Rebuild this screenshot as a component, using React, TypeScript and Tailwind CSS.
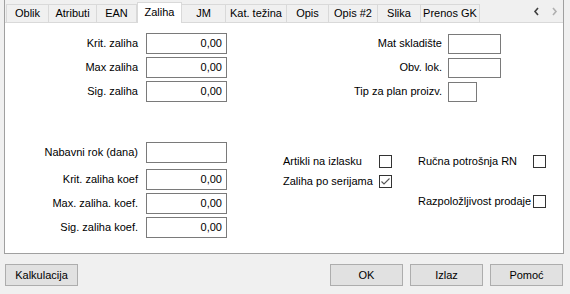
import React from 'react'

const tabs = [
  { name: 'Oblik', w: 'w-[43px]' },
  { name: 'Atributi', w: 'w-[48px]' },
  { name: 'EAN', w: 'w-[40px]' },
  { name: 'Zaliha', w: 'w-[45px]', active: true },
  { name: 'JM', w: 'w-[44px]' },
  { name: 'Kat. težina', w: 'w-[61px]' },
  { name: 'Opis', w: 'w-[42px]' },
  { name: 'Opis #2', w: 'w-[49px]' },
  { name: 'Slika', w: 'w-[43px]' },
  { name: 'Prenos GK', w: 'w-[59px]' },
]

const Input = ({ value, className }: { value?: string; className: string }) => (
  <div
    className={`bg-white border border-[#7a7a7a] flex items-center justify-end pr-[4px] ${className}`}
  >
    {value}
  </div>
)

const LeftRow = ({ label, value }: { label: string; value?: string }) => (
  <div className="flex items-center h-[21px] gap-[8px]">
    <div className="w-[133px] text-right">{label}</div>
    <Input value={value} className="w-[81px] h-[21px]" />
  </div>
)

const RightRow = ({ label, w }: { label: string; w: string }) => (
  <div className="flex items-center h-[21px] gap-[6px]">
    <div className="w-[120px] text-right">{label}</div>
    <Input className={`${w} h-[20px]`} />
  </div>
)

const Checkbox = ({ checked }: { checked?: boolean }) => (
  <div className="w-[13px] h-[13px] border border-[#333] bg-white flex items-center justify-center">
    {checked && (
      <svg width="11" height="11" viewBox="0 0 11 11">
        <path d="M1.5 5.5 L4 8 L9.5 2.5" fill="none" stroke="#555" strokeWidth="1.1" />
      </svg>
    )}
  </div>
)

const Button = ({ label }: { label: string }) => (
  <div className="w-[73px] h-[22px] bg-[#e1e1e1] border border-[#adadad] flex items-center justify-center">
    {label}
  </div>
)

export default function App() {
  return (
    <div className="w-[570px] h-[294px] bg-[#f0f0f0] text-[11px] text-black overflow-hidden font-['Liberation_Sans',Arial,sans-serif]">
      <div className="ml-[4px] w-[560px] h-[254px] border-x border-b border-[#a0a0a0] flex flex-col">
        {/* Tabs */}
        <div className="h-[22px] flex items-end pl-[1px] shrink-0">
          {tabs.map((t, i) =>
            t.active ? (
              <div
                key={t.name}
                className={`${t.w} h-[21px] -mb-px relative z-10 bg-white border-x border-t border-[#d9d9d9] flex items-center justify-center pb-[2px]`}
              >
                {t.name}
              </div>
            ) : (
              <div
                key={t.name}
                className={`${t.w} h-[18px] border-t border-r border-[#d9d9d9] ${i === 0 ? 'border-l' : ''} flex items-center justify-center`}
              >
                {t.name}
              </div>
            )
          )}
          <div className="ml-auto w-[36px] h-[22px] flex items-center">
            <div className="w-[18px] flex justify-center">
              <svg width="7" height="9" viewBox="0 0 7 9">
                <path d="M5 1 L2 4.5 L5 8" fill="none" stroke="#404040" strokeWidth="1.6" />
              </svg>
            </div>
            <div className="w-[18px] flex justify-center">
              <svg width="7" height="9" viewBox="0 0 7 9">
                <path d="M2 1 L5 4.5 L2 8" fill="none" stroke="#b0b0b0" strokeWidth="1.6" />
              </svg>
            </div>
          </div>
        </div>

        {/* Panel */}
        <div className="flex-1 bg-white border-t border-[#d9d9d9] pt-[10px]">
          <div className="flex">
            <div className="flex flex-col gap-[3px]">
              <LeftRow label="Krit. zaliha" value="0,00" />
              <LeftRow label="Max zaliha" value="0,00" />
              <LeftRow label="Sig. zaliha" value="0,00" />
            </div>
            <div className="ml-[95px] flex flex-col gap-[3px]">
              <RightRow label="Mat skladište" w="w-[53px]" />
              <RightRow label="Obv. lok." w="w-[53px]" />
              <RightRow label="Tip za plan proizv." w="w-[29px]" />
            </div>
          </div>

          <div className="flex mt-[40px]">
            <div className="flex flex-col">
              <LeftRow label="Nabavni rok (dana)" />
              <div className="flex flex-col gap-[3px] mt-[6px]">
                <LeftRow label="Krit. zaliha koef" value="0,00" />
                <LeftRow label="Max. zaliha. koef." value="0,00" />
                <LeftRow label="Sig. zaliha koef." value="0,00" />
              </div>
            </div>
            <div className="ml-[56px] mt-[9px] grid grid-cols-[135px_auto] auto-rows-[20px]">
              <div className="flex items-center">
                <div className="w-[96px]">Artikli na izlasku</div>
                <Checkbox />
              </div>
              <div className="flex items-center">
                <div className="w-[115px]">Ručna potrošnja RN</div>
                <Checkbox />
              </div>
              <div className="flex items-center">
                <div className="w-[96px]">Zaliha po serijama</div>
                <Checkbox checked />
              </div>
              <div />
              <div />
              <div className="flex items-center">
                <div className="w-[115px]">Razpoložljivost prodaje</div>
                <Checkbox />
              </div>
            </div>
          </div>
        </div>
      </div>

      {/* Buttons */}
      <div className="flex mt-[10px] pl-[5px] pr-[7px]">
        <Button label="Kalkulacija" />
        <div className="ml-auto flex gap-[7px]">
          <Button label="OK" />
          <Button label="Izlaz" />
          <Button label="Pomoć" />
        </div>
      </div>
    </div>
  )
}
